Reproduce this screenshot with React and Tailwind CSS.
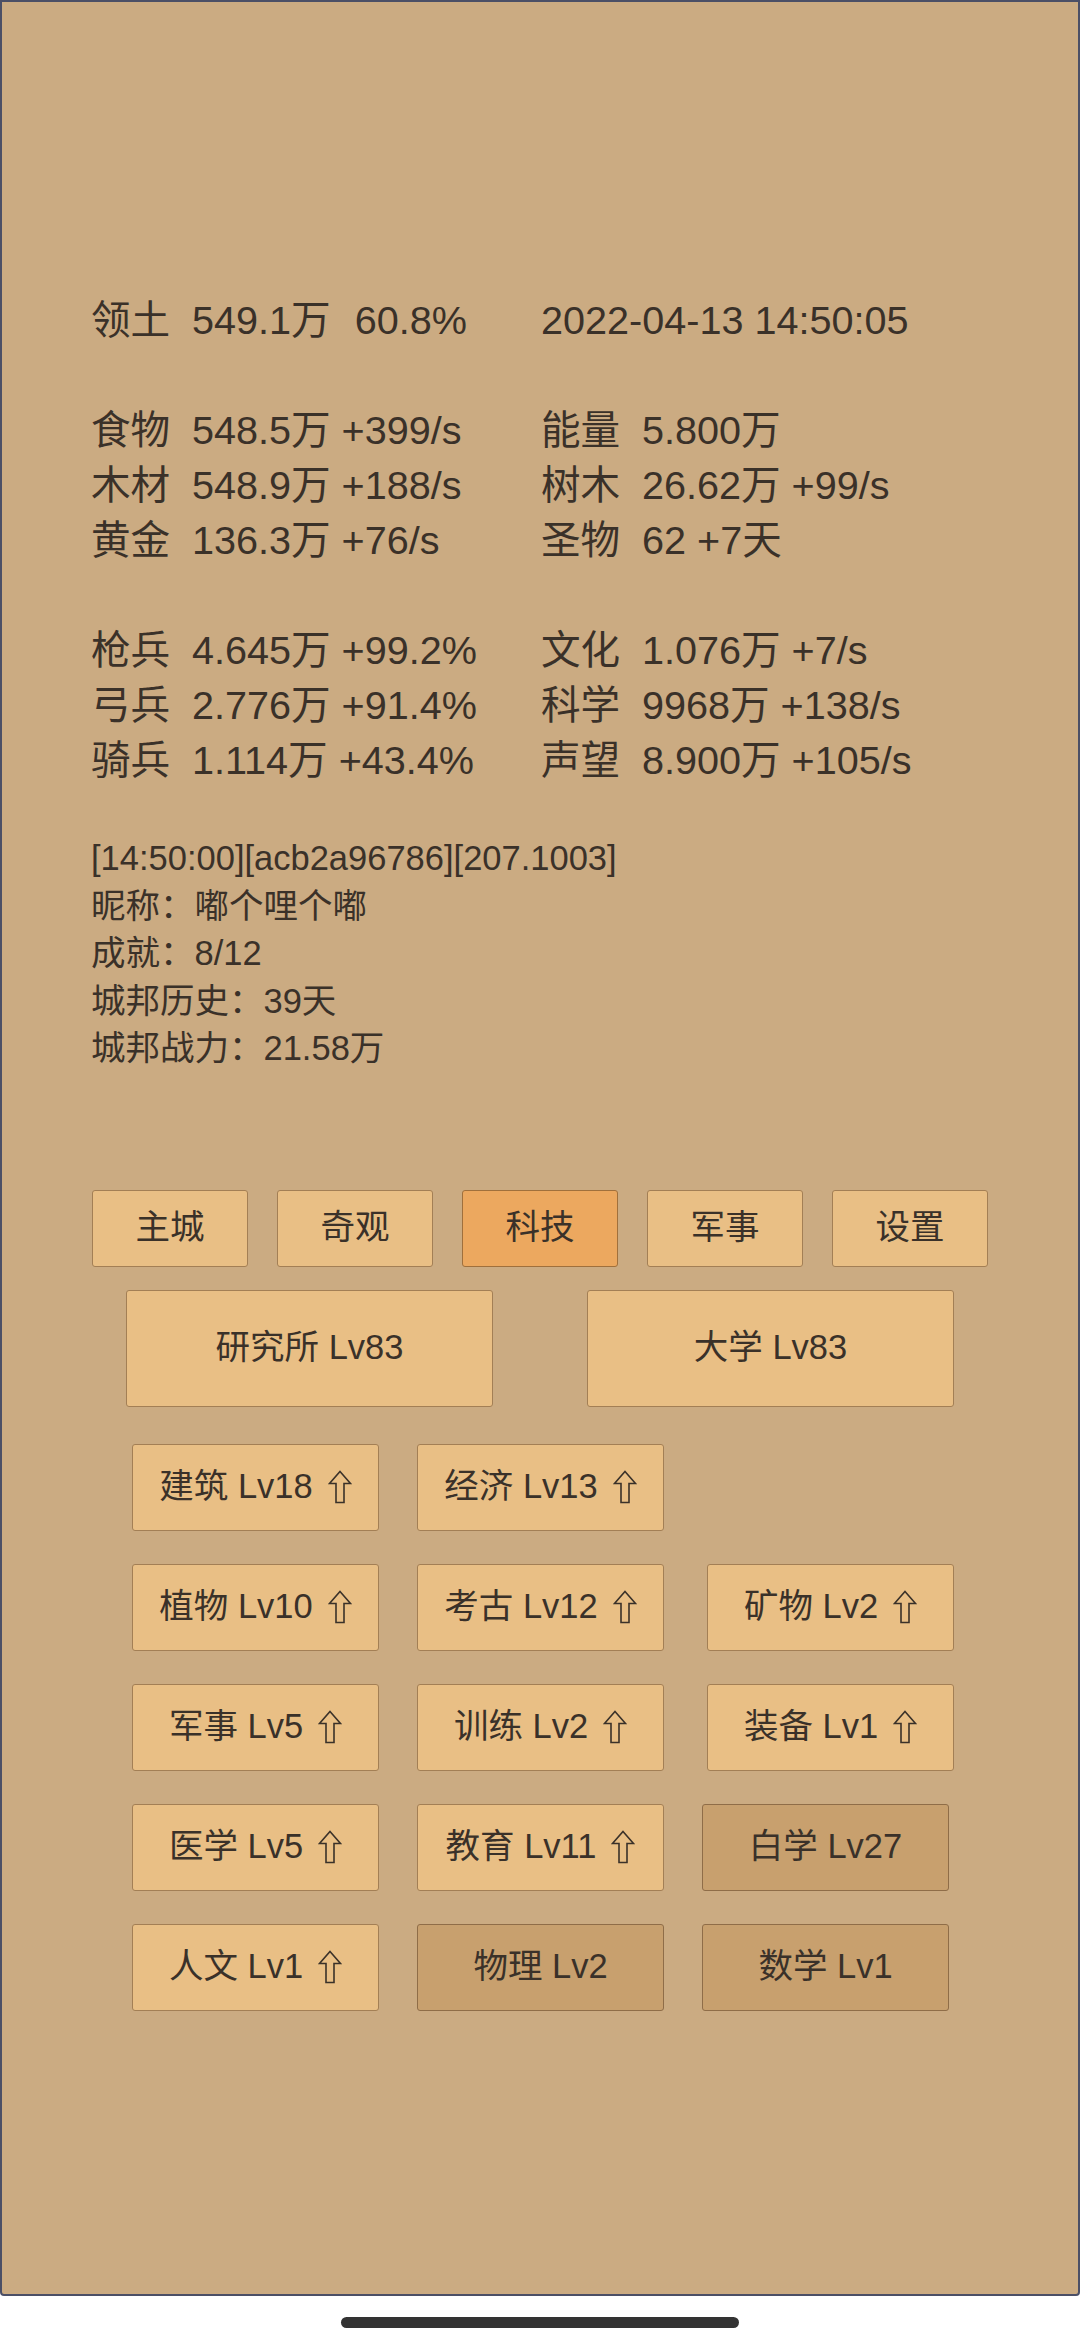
import React from 'react'

const font = { fontFamily: '"Liberation Sans", "Noto Sans CJK SC", "DejaVu Sans", sans-serif' }

const leftStats = [
    ['食物', '548.5万 +399/s'],
    ['木材', '548.9万 +188/s'],
    ['黄金', '136.3万 +76/s'],
]
const rightStats = [
    ['能量', '5.800万'],
    ['树木', '26.62万 +99/s'],
    ['圣物', '62 +7天'],
]
const leftArmy = [
    ['枪兵', '4.645万 +99.2%'],
    ['弓兵', '2.776万 +91.4%'],
    ['骑兵', '1.114万 +43.4%'],
]
const rightArmy = [
    ['文化', '1.076万 +7/s'],
    ['科学', '9968万 +138/s'],
    ['声望', '8.900万 +105/s'],
]

const tabs = ['主城', '奇观', '科技', '军事', '设置']

function Stat({ label, value }) {
    return (
        <div className="flex h-[55px] items-center whitespace-nowrap">
            <span className="w-[80px] mr-[21px]">{label}</span>
            <span>{value}</span>
        </div>
    )
}

// outlined up arrow, like the ⇧ glyph in the original
function Arrow() {
    return (
        <svg className="ml-[15px] h-[34px] w-[24px] shrink-0" viewBox="0 0 24 34" fill="none" stroke="#3a3129" strokeWidth="1.6" strokeLinejoin="miter">
            <path d="M12 1.5 L22.5 13.5 L16 13.5 L16 32.5 L8 32.5 L8 13.5 L1.5 13.5 Z" />
        </svg>
    )
}

function TechButton({ label, up, dark, className = '' }) {
    return (
        <div
            className={`flex h-[87px] w-[247px] items-center justify-center rounded-[3px] border text-[34.5px] whitespace-nowrap ${
                dark ? 'bg-[#c8a06e] border-[#8f6d48]' : 'bg-[#e9bf85] border-[#a37f55]'
            } ${className}`}
        >
            <span>{label}</span>
            {up && <Arrow />}
        </div>
    )
}

export default function App() {
    return (
        <div className="w-[1080px] h-[2340px] bg-white text-[#3a3129]" style={font}>
            <div className="h-[2296px] border-2 border-[#4b4f66] bg-[#cbab82] rounded-b-[4px] pl-[89px] pt-[291px]">
                {/* resources */}
                <div className="grid grid-cols-[450px_1fr] text-[39.6px]">
                    <div className="flex h-[55px] items-center whitespace-nowrap">
                        <span className="w-[80px] mr-[21px]">领土</span>
                        <span className="mr-[24px]">549.1万</span>
                        <span>60.8%</span>
                    </div>
                    <div className="flex h-[55px] items-center">2022-04-13 14:50:05</div>

                    <div className="h-[55px]" />
                    <div className="h-[55px]" />

                    <div>
                        {leftStats.map(([l, v]) => <Stat key={l} label={l} value={v} />)}
                    </div>
                    <div>
                        {rightStats.map(([l, v]) => <Stat key={l} label={l} value={v} />)}
                    </div>

                    <div className="h-[55px]" />
                    <div className="h-[55px]" />

                    <div>
                        {leftArmy.map(([l, v]) => <Stat key={l} label={l} value={v} />)}
                    </div>
                    <div>
                        {rightArmy.map(([l, v]) => <Stat key={l} label={l} value={v} />)}
                    </div>
                </div>

                {/* info */}
                <div className="mt-[47px] text-[34.5px] leading-[47.5px]">
                    <div>[14:50:00][acb2a96786][207.1003]</div>
                    <div>昵称：嘟个哩个嘟</div>
                    <div>成就：8/12</div>
                    <div>城邦历史：39天</div>
                    <div>城邦战力：21.58万</div>
                </div>

                {/* tabs */}
                <div className="mt-[117px] ml-[1px] flex gap-[29px]">
                    {tabs.map(t => (
                        <div
                            key={t}
                            className={`flex h-[77px] w-[156px] items-center justify-center rounded-[3px] border text-[34.5px] ${
                                t === '科技' ? 'bg-[#eca85f] border-[#a0703c]' : 'bg-[#e9bf85] border-[#a37f55]'
                            }`}
                        >
                            {t}
                        </div>
                    ))}
                </div>

                <div className="mt-[23px] ml-[35px] flex gap-[94px]">
                    <div className="flex h-[117px] w-[367px] items-center justify-center rounded-[3px] border border-[#a37f55] bg-[#e9bf85] text-[34.5px]">
                        研究所 Lv83
                    </div>
                    <div className="flex h-[117px] w-[367px] items-center justify-center rounded-[3px] border border-[#a37f55] bg-[#e9bf85] text-[34.5px]">
                        大学 Lv83
                    </div>
                </div>

                {/* tech tree */}
                <div className="mt-[37px] ml-[41px] flex flex-col gap-[33px]">
                    <div className="flex">
                        <TechButton label="建筑 Lv18" up />
                        <TechButton label="经济 Lv13" up className="ml-[38px]" />
                    </div>
                    <div className="flex">
                        <TechButton label="植物 Lv10" up />
                        <TechButton label="考古 Lv12" up className="ml-[38px]" />
                        <TechButton label="矿物 Lv2" up className="ml-[43px]" />
                    </div>
                    <div className="flex">
                        <TechButton label="军事 Lv5" up />
                        <TechButton label="训练 Lv2" up className="ml-[38px]" />
                        <TechButton label="装备 Lv1" up className="ml-[43px]" />
                    </div>
                    <div className="flex">
                        <TechButton label="医学 Lv5" up />
                        <TechButton label="教育 Lv11" up className="ml-[38px]" />
                        <TechButton label="白学 Lv27" dark className="ml-[38px]" />
                    </div>
                    <div className="flex">
                        <TechButton label="人文 Lv1" up />
                        <TechButton label="物理 Lv2" dark className="ml-[38px]" />
                        <TechButton label="数学 Lv1" dark className="ml-[38px]" />
                    </div>
                </div>
            </div>

            <div className="flex justify-center pt-[21px]">
                <div className="h-[11px] w-[398px] rounded-full bg-[#333333]" />
            </div>
        </div>
    )
}
